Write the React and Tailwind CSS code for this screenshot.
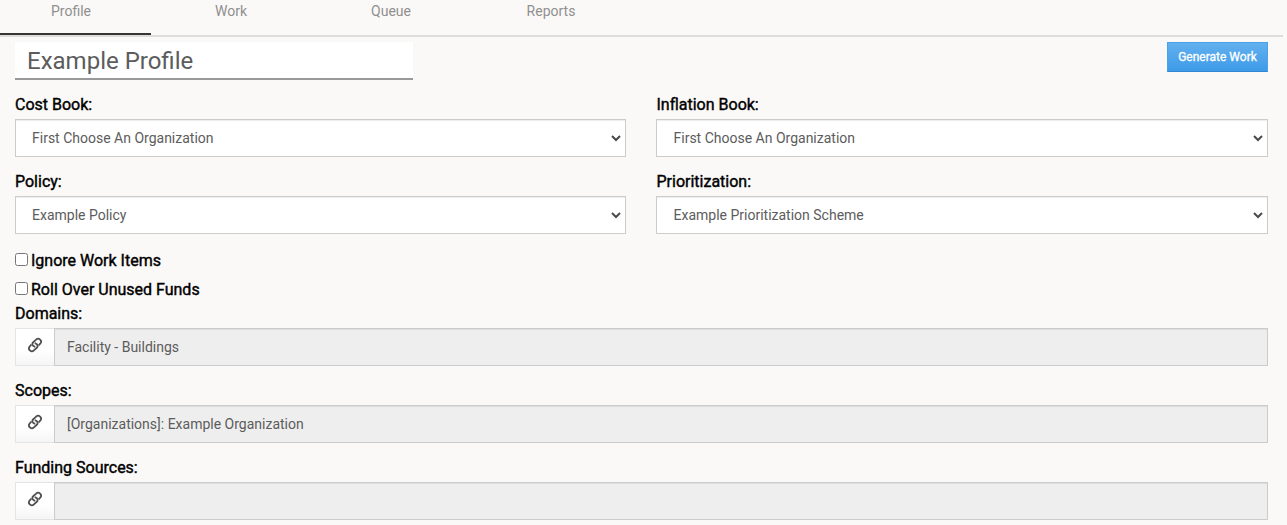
const tabs = ['Profile', 'Work', 'Queue', 'Reports'];

function ChainIcon() {
  return (
    <svg width="14" height="16" viewBox="0 0 14 16" fill="none" stroke="currentColor" strokeWidth="1.8" strokeLinecap="butt" strokeLinejoin="round">
      <path d="M10.6 8.5 12.2 6.6a2.8 2.8 0 0 0-4.1-3.9L5 5.5a2.2 2.2 0 0 0 .2 3.3l1.9 1.3" />
      <path d="M3.4 7.5 1.8 9.4a2.8 2.8 0 0 0 4.1 3.9L9 10.5a2.2 2.2 0 0 0-.2-3.3L6.9 5.9" />
    </svg>
  );
}

function Label({ children }) {
  return (
    <span className="block h-6 text-[16px] leading-6 text-black [-webkit-text-stroke:0.4px_black]">
      {children}
    </span>
  );
}

function SelectField({ label, value, width, inset }) {
  return (
    <label className={'block ' + width}>
      <span className={'block ' + inset}>
        <Label>{label}</Label>
      </span>
      <span className="relative mt-[2px] block">
        <select className={'block h-[38px] w-full appearance-none border border-[#cccccc] bg-white py-1.5 pr-4 text-[14px] text-[#5c5c5c] shadow-[inset_0_1px_1px_rgba(0,0,0,0.075)] ' + (inset ? 'pl-[16.5px]' : 'pl-4')}>
          <option>{value}</option>
        </select>
        <svg className="pointer-events-none absolute top-[16px] right-[5px]" width="10" height="7" viewBox="0 0 10 7" fill="none" stroke="#4a4a4a" strokeWidth="2">
          <path d="M1 1 5 5 9 1" />
        </svg>
      </span>
    </label>
  );
}

function CheckField({ label }) {
  return (
    <label className="flex h-[29px] items-center gap-[3px]">
      <input type="checkbox" className="mb-[3px] h-[13px] w-[13px]" />
      <Label>{label}</Label>
    </label>
  );
}

function LinkField({ label, value }) {
  return (
    <div className="h-[77px] shrink-0">
      <Label>{label}</Label>
      <div className="mt-[2px] flex h-[38px]">
        <button className="flex w-[39px] items-center justify-center border border-r-0 border-[#e4e4e4] bg-linear-to-b from-white from-60% to-[#f5f5f5] pb-1 text-[#505050]">
          <ChainIcon />
        </button>
        <div className="flex flex-1 items-center border border-[#cccccc] bg-[#eeeeee] px-3 text-[14px] text-[#5c5c5c] shadow-[inset_0_1px_1px_rgba(0,0,0,0.075)]">
          {value}
        </div>
      </div>
    </div>
  );
}

export default function App() {
  return (
    <div className="h-[525px] w-[1287px] overflow-hidden bg-[#faf9f7] font-[Roboto,sans-serif]">
      <nav className="mr-1 flex h-[37px] border-b-2 border-[#dddddd]">
        {tabs.map((tab, i) => (
          <div
            key={tab}
            className={
              i === 0
                ? 'h-[35px] w-[151px] border-b-2 border-[#383632] pr-[9px] text-center text-[14px] leading-[22px] text-[#909090]'
                : 'h-[35px] w-[160px] text-center text-[14px] leading-[22px] text-[#909090]'
            }
          >
            {tab}
          </div>
        ))}
      </nav>
      <main className="flex flex-col pt-[5px] pr-[19px] pl-[15px]">
        <div className="flex items-start justify-between">
          <div className="h-[38px] w-[398px] border-b-2 border-[#999999] bg-white px-3 text-[24px] leading-[38px] text-[#5c5c5c]">
            Example Profile
          </div>
          <button className="h-[30px] w-[101px] border border-[#4ba2e8] border-b-[#3288d2] bg-linear-to-b from-[#62b0ee] to-[#3d9be9] text-[12px] text-white [-webkit-text-stroke:0.3px_white]">
            Generate Work
          </button>
        </div>
        <div className="mt-[13px] flex h-[77px] gap-[30px]">
          <SelectField label="Cost Book:" value="First Choose An Organization" width="w-[611px]" inset="" />
          <SelectField label="Inflation Book:" value="First Choose An Organization" width="w-[612px]" inset="pl-[0.5px]" />
        </div>
        <div className="flex h-[74px] gap-[30px]">
          <SelectField label="Policy:" value="Example Policy" width="w-[611px]" inset="" />
          <SelectField label="Prioritization:" value="Example Prioritization Scheme" width="w-[612px]" inset="pl-[0.5px]" />
        </div>
        <div className="flex h-[60px] flex-col pt-[2px]">
          <CheckField label="Ignore Work Items" />
          <CheckField label="Roll Over Unused Funds" />
        </div>
        <div className="-mt-[2px]">
          <LinkField label="Domains:" value="Facility - Buildings" />
          <LinkField label="Scopes:" value="[Organizations]: Example Organization" />
          <LinkField label="Funding Sources:" value="" />
        </div>
      </main>
    </div>
  );
}
